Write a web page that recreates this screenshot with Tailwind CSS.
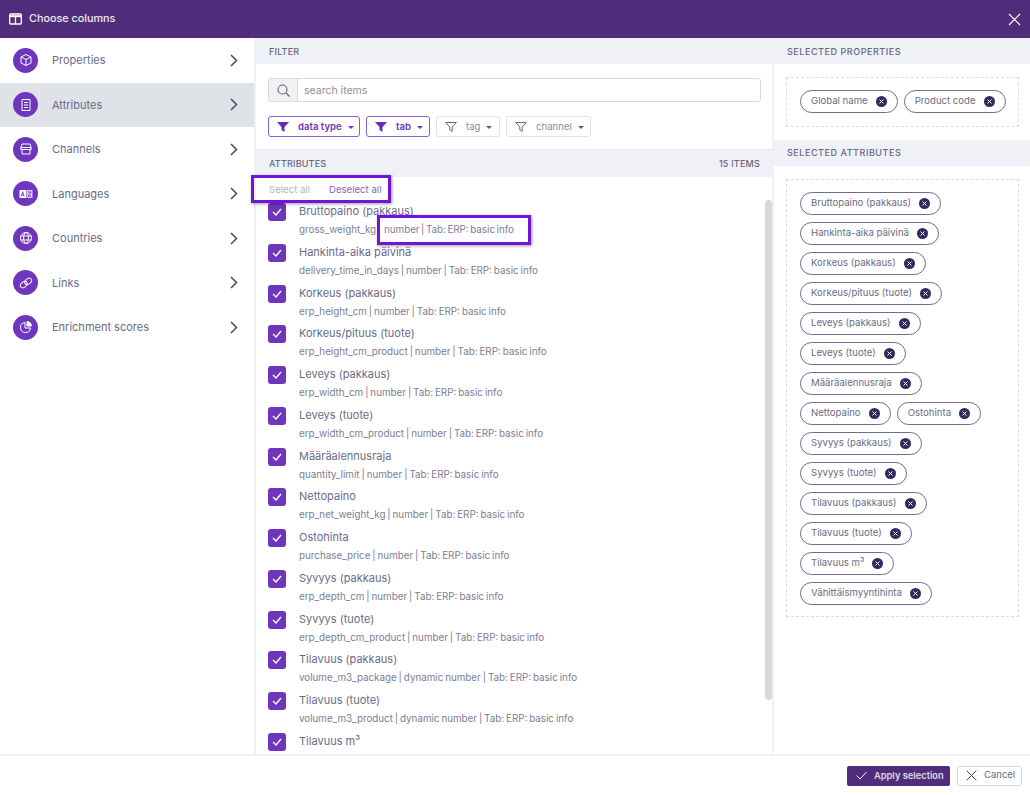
<!DOCTYPE html>
<html lang="fi">
  <head>
    <meta charset="UTF-8" />
    <title>Choose columns</title>
    <script src="https://cdn.jsdelivr.net/npm/@tailwindcss/browser@4"></script>
  </head>
  <body class="bg-white font-['Inter',sans-serif] text-[#6b6a8a] overflow-hidden">
    <div class="relative w-[1030px] h-[795px] flex flex-col overflow-hidden">
      <!-- Header -->
      <header class="h-[38px] bg-[#4f2d7a] text-white flex items-center justify-between pl-[9px] pr-[9px] shrink-0">
        <div class="flex items-center gap-[7px]">
          <svg class="w-[13px] h-[12px]" viewBox="0 0 13 12" fill="none" stroke="#fff" stroke-width="1.3"><rect x="0.7" y="1" width="11.6" height="10" rx="1"/><path d="M0.7 3.2h11.6" stroke-width="2"/><path d="M6.5 3v8"/></svg>
          <span class="text-[10.8px] leading-[14px] font-medium text-white/90">Choose columns</span>
        </div>
        <svg class="w-[13px] h-[13px]" viewBox="0 0 13 13" stroke="#fff" stroke-width="1.2"><path d="M1 1l11 11M12 1L1 12"/></svg>
      </header>

      <div class="flex-1 flex min-h-0">
        <!-- Sidebar -->
        <aside class="w-[256px] border-r-2 border-[#f0f1f4] shrink-0" id="nav"></aside>

        <!-- Middle column -->
        <main class="w-[518px] flex flex-col border-r-2 border-[#f0f1f4] shrink-0 min-h-0">
          <div class="h-[26px] bg-[#f0f1f7] pl-[13px] pt-[1px] flex items-center text-[9px] font-medium tracking-[0.2px] text-[#67667f]">FILTER</div>
          <div class="h-[86px] px-[12px] pt-[14px] border-b border-[#e8e9ef]">
            <div class="flex h-[24px] w-[493px] border border-[#d8dae0] rounded-[3px] overflow-hidden">
              <div class="w-[29px] bg-[#f0f1f5] border-r border-[#d8dae0] flex items-center justify-center">
                <svg class="w-[13px] h-[13px]" viewBox="0 0 13 13" fill="none" stroke="#5f5e7a" stroke-width="1.1"><circle cx="5.5" cy="5.5" r="4.5"/><path d="M9 9l3.5 3.5"/></svg>
              </div>
              <div class="flex-1 flex items-center pl-[6px] pt-[1px] text-[10.5px] text-[#8d8d9f]">search items</div>
            </div>
            <div class="flex gap-[6px] mt-[14px]">
              <div class="h-[21px] w-[92px] border border-[#8a5fd0] rounded-[3px] flex items-center pl-[8px] pt-[1px] text-[9.6px] font-semibold text-[#6f35bd]">
                <svg class="w-[12px] h-[10px] mr-[9px]" viewBox="0 0 12 10" fill="#5f2eb0"><path d="M0 0h12L7.5 5v5L4.5 8V5z"/></svg>data type<span class="ml-[6px] border-x-[3px] border-x-transparent border-t-[3px] border-t-[#6f35bd]"></span>
              </div>
              <div class="h-[21px] w-[64px] border border-[#8a5fd0] rounded-[3px] flex items-center pl-[8px] pt-[1px] text-[9.6px] font-semibold text-[#6f35bd]">
                <svg class="w-[12px] h-[10px] mr-[9px]" viewBox="0 0 12 10" fill="#5f2eb0"><path d="M0 0h12L7.5 5v5L4.5 8V5z"/></svg>tab<span class="ml-[6px] border-x-[3px] border-x-transparent border-t-[3px] border-t-[#6f35bd]"></span>
              </div>
              <div class="h-[21px] w-[64px] border border-[#e0e2ea] rounded-[3px] flex items-center pl-[8px] pt-[1px] text-[9.6px] text-[#8c8aa3]">
                <svg class="w-[12px] h-[10px] mr-[9px]" viewBox="0 0 12 10" fill="none" stroke="#6b6a8a"><path d="M.7.5h10.6L7.2 5v4.3L4.8 8V5z"/></svg>tag<span class="ml-[6px] border-x-[3px] border-x-transparent border-t-[3px] border-t-[#5f5e7a]"></span>
              </div>
              <div class="h-[21px] w-[85px] border border-[#e0e2ea] rounded-[3px] flex items-center pl-[8px] pt-[1px] text-[9.6px] text-[#8c8aa3]">
                <svg class="w-[12px] h-[10px] mr-[9px]" viewBox="0 0 12 10" fill="none" stroke="#6b6a8a"><path d="M.7.5h10.6L7.2 5v4.3L4.8 8V5z"/></svg>channel<span class="ml-[6px] border-x-[3px] border-x-transparent border-t-[3px] border-t-[#5f5e7a]"></span>
              </div>
            </div>
          </div>
          <div class="h-[27px] bg-[#f0f1f7] pl-[13px] pr-[12px] flex items-center justify-between text-[9px] font-medium tracking-[0.2px] text-[#67667f] shrink-0">
            <span>ATTRIBUTES</span><span>15 ITEMS</span>
          </div>
          <div class="h-[22px] flex items-center pl-[13px] pt-[5px] gap-[19px] text-[9.6px] shrink-0">
            <span class="text-[#b4b4bf]">Select all</span>
            <span class="text-[#8a5fd0]">Deselect all</span>
          </div>
          <div class="relative flex-1 min-h-0 overflow-hidden">
            <div id="rows" class="pl-[12px] pt-[1px]"></div>
            <div class="absolute right-[0px] top-[1px] w-[7px] h-[500px] bg-[#d9d9d9] rounded-[4px]"></div>
          </div>
        </main>

        <!-- Selected column -->
        <section class="flex-1 min-w-0">
          <div class="h-[26px] bg-[#f0f1f7] pl-[13px] pt-[1px] flex items-center text-[9px] font-medium tracking-[0.55px] text-[#67667f]">SELECTED PROPERTIES</div>
          <div class="px-[12px] pt-[13px] pb-[13px]">
            <div class="h-[50px] w-[233px] border border-dashed border-[#dcdde3] pl-[13px] pt-[12px] flex gap-[6px]" id="props"></div>
          </div>
          <div class="h-[26px] bg-[#f0f1f7] pl-[13px] flex items-center text-[9px] font-medium tracking-[0.55px] text-[#67667f]">SELECTED ATTRIBUTES</div>
          <div class="px-[12px] pt-[13px]">
            <div class="h-[438px] w-[233px] border border-dashed border-[#dcdde3] pl-[13px] pr-[19px] pt-[12px] flex flex-wrap content-start gap-x-[6px] gap-y-[7px]" id="attrs"></div>
          </div>
        </section>
      </div>

      <!-- Footer -->
      <footer class="h-[41px] border-t-2 border-[#f0f1f4] flex items-center justify-end pr-[8px] gap-[7px] shrink-0">
        <div class="h-[20px] w-[103px] bg-[#4f2d7a] rounded-[2px] flex items-center pl-[9px] text-[9.3px] font-semibold text-white/80">
          <svg class="w-[11px] h-[9px] mr-[7px]" viewBox="0 0 11 9" fill="none" stroke="#fff" stroke-width="1"><path d="M.5 4.5L4 8l6.5-7"/></svg>Apply selection
        </div>
        <div class="h-[20px] w-[65px] border border-[#d8dae0] rounded-[2px] flex items-center pl-[8px] text-[9.5px] text-[#6b6a8a]">
          <svg class="w-[11px] h-[11px] mr-[7px]" viewBox="0 0 11 11" stroke="#3f3e5a" stroke-width="1"><path d="M.7.7l9.6 9.6M10.3.7L.7 10.3"/></svg>Cancel
        </div>
      </footer>

      <!-- Highlight frames -->
      <div class="absolute left-[251px] top-[175px] w-[140px] h-[28px] border-[3px] border-[#6f14d9] shadow-[1px_1px_3px_rgba(0,0,0,0.4)]"></div>
      <div class="absolute left-[377px] top-[215px] w-[154px] h-[30px] bg-white border-[3px] border-[#6f14d9] shadow-[1px_1px_3px_rgba(0,0,0,0.4)] flex items-center pl-[4px] text-[9.8px] [word-spacing:-1.2px] text-[#7d7c98] whitespace-nowrap">number | Tab: ERP: basic info</div>
    </div>

    <script>
      const navIcons = {
        Properties: '<path d="M8 2.5l5 2.5v6l-5 2.5-5-2.5V5z"/><path d="M3 5l5 2.5L13 5M8 7.5v6"/>',
        Attributes: '<path d="M4 2.5h8v11H4z"/><path d="M6 5.5h4M6 8h4M6 10.5h4"/>',
        Channels: '<path d="M3 6.5l1-3.5h8l1 3.5z"/><path d="M2.8 6.5h10.4v2H2.8zM4 8.5v4.5h8V8.5"/>',
        Languages: '<rect x="1.5" y="4" width="6.5" height="8" fill="#fff" stroke="none"/><rect x="8.5" y="4" width="6" height="8" fill="#fff" fill-opacity="0.75" stroke="none"/><path d="M3.3 10.3l1.4-4.5 1.4 4.5M3.9 8.9h1.7M10 6h3l-3 4.2h3" stroke="#6f35bd" stroke-width="0.9"/>',
        Countries: '<circle cx="8" cy="8" r="5.5"/><ellipse cx="8" cy="8" rx="2.4" ry="5.5"/><path d="M2.7 6h10.6M2.7 10h10.6"/>',
        Links: '<ellipse cx="5.8" cy="9.6" rx="3.8" ry="2.6" transform="rotate(-40 5.8 9.6)"/><ellipse cx="10.2" cy="6.4" rx="3.8" ry="2.6" transform="rotate(-40 10.2 6.4)"/>',
        "Enrichment scores": '<path d="M7 3.5a5 5 0 1 0 5.5 5.5H7z"/><path d="M9 2.5a4.5 4.5 0 0 1 4.5 4.5H9z" fill="#fff"/>',
      };
      document.getElementById("nav").innerHTML = Object.keys(navIcons).map((name) => `
        <div class="h-[44.5px] flex items-center pl-[13px] pr-[16px] ${name === "Attributes" ? "bg-[#dfe2e6]" : ""}">
          <span class="w-[25px] h-[25px] rounded-full bg-[#6f35bd] flex items-center justify-center shrink-0">
            <svg class="w-[16px] h-[16px]" viewBox="0 0 16 16" fill="none" stroke="#fff" stroke-width="1">${navIcons[name]}</svg>
          </span>
          <span class="ml-[14px] flex-1 text-[11px] text-[#6b6a8a]">${name}</span>
          <svg class="w-[8px] h-[13px]" viewBox="0 0 8 13" fill="none" stroke="#4a4968" stroke-width="1.5"><path d="M1 1l5.5 5.5L1 12"/></svg>
        </div>`).join("");

      const rows = [
        // the rest of this line sits in the highlight frame
        ["Bruttopaino (pakkaus)", "gross_weight_kg"],
        ["Hankinta-aika päivinä", "delivery_time_in_days | number | Tab: ERP: basic info"],
        ["Korkeus (pakkaus)", "erp_height_cm | number | Tab: ERP: basic info"],
        ["Korkeus/pituus (tuote)", "erp_height_cm_product | number | Tab: ERP: basic info"],
        ["Leveys (pakkaus)", "erp_width_cm | number | Tab: ERP: basic info"],
        ["Leveys (tuote)", "erp_width_cm_product | number | Tab: ERP: basic info"],
        ["Määräalennusraja", "quantity_limit | number | Tab: ERP: basic info"],
        ["Nettopaino", "erp_net_weight_kg | number | Tab: ERP: basic info"],
        ["Ostohinta", "purchase_price | number | Tab: ERP: basic info"],
        ["Syvyys (pakkaus)", "erp_depth_cm | number | Tab: ERP: basic info"],
        ["Syvyys (tuote)", "erp_depth_cm_product | number | Tab: ERP: basic info"],
        ["Tilavuus (pakkaus)", "volume_m3_package | dynamic number | Tab: ERP: basic info"],
        ["Tilavuus (tuote)", "volume_m3_product | dynamic number | Tab: ERP: basic info"],
        ["Tilavuus m³", ""],
      ];
      document.getElementById("rows").innerHTML = rows.map((r) => `
        <div class="h-[40.75px] flex">
          <span class="w-[18px] h-[18px] rounded-[3px] bg-[#6f35bd] flex items-center justify-center shrink-0 mt-[3px]">
            <svg class="w-[10px] h-[8px]" viewBox="0 0 10 8" fill="none" stroke="#fff" stroke-width="1.4"><path d="M1 4l3 3 5-6"/></svg>
          </span>
          <div class="ml-[13px] whitespace-nowrap">
            <div class="text-[11px] leading-[15px] mt-[4px] text-[#6b6a8a]">${r[0]}</div>
            <div class="text-[9.8px] [word-spacing:-0.8px] leading-[14px] mt-[4px] text-[#7d7c98]">${r[1]}</div>
          </div>
        </div>`).join("");

      const chip = (t) => `
        <span class="h-[23px] border border-[#6f6c92] rounded-full pl-[10px] pr-[10px] flex items-center text-[9.6px] text-[#6b6a8a] whitespace-nowrap">
          ${t}<span class="w-[11px] h-[11px] ml-[8px] rounded-full bg-[#2f2b5e] flex items-center justify-center">
            <svg class="w-[5px] h-[5px]" viewBox="0 0 5 5" stroke="#fff" stroke-width="1"><path d="M.5.5l4 4M4.5.5l-4 4"/></svg>
          </span>
        </span>`;
      document.getElementById("props").innerHTML = ["Global name", "Product code"].map(chip).join("");
      document.getElementById("attrs").innerHTML = [
        "Bruttopaino (pakkaus)", "Hankinta-aika päivinä", "Korkeus (pakkaus)", "Korkeus/pituus (tuote)",
        "Leveys (pakkaus)", "Leveys (tuote)", "Määräalennusraja", "Nettopaino", "Ostohinta",
        "Syvyys (pakkaus)", "Syvyys (tuote)", "Tilavuus (pakkaus)", "Tilavuus (tuote)", "Tilavuus m³", "Vähittäismyyntihinta",
      ].map(chip).join("");
    </script>
  </body>
</html>
